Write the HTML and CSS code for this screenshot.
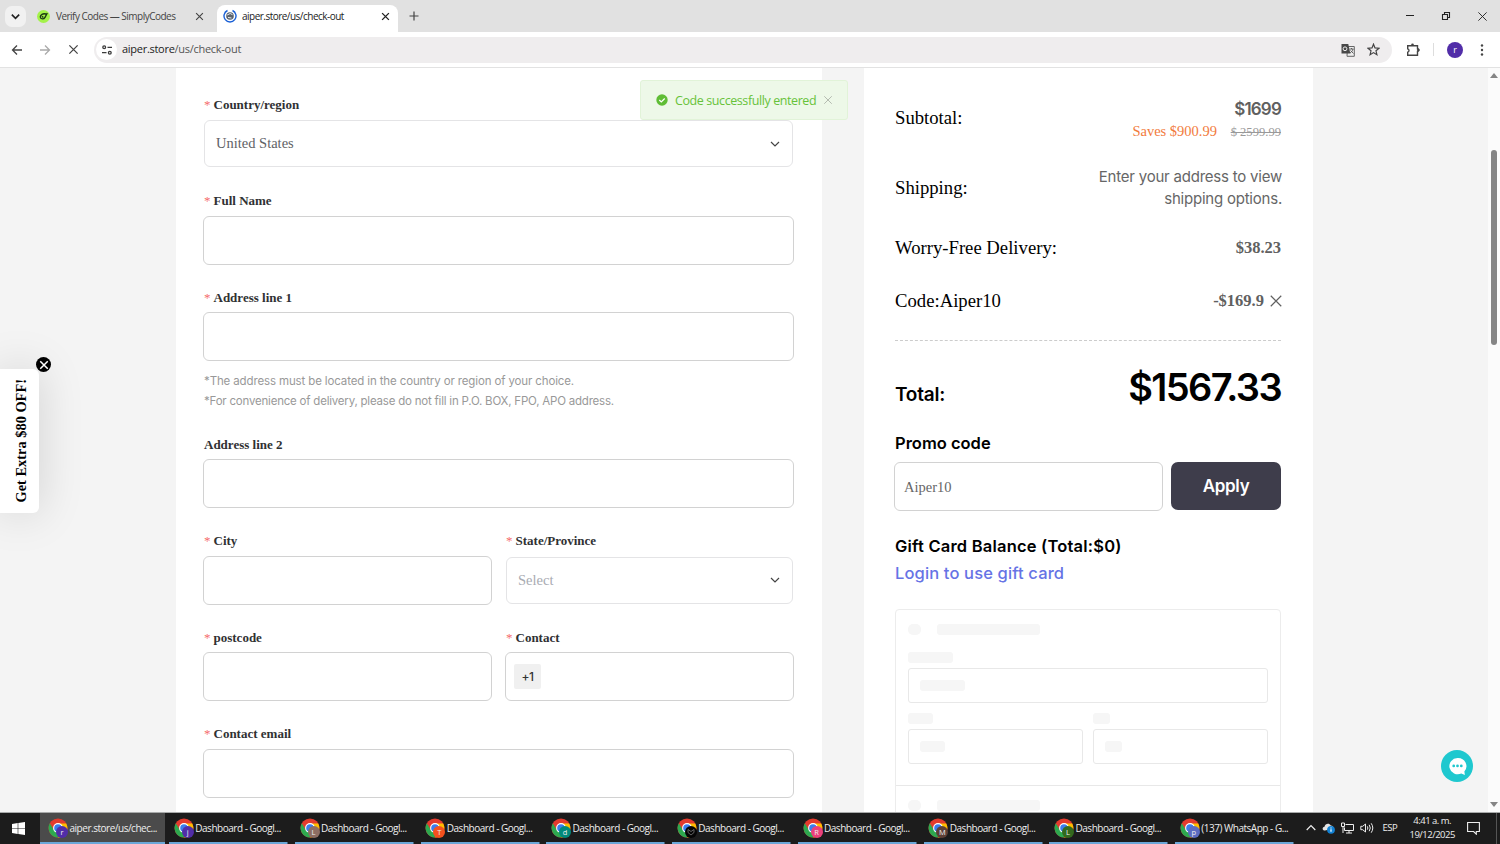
FILE: index.html
```html
<!DOCTYPE html>
<html lang="en">
<head>
  <meta charset="UTF-8" />
  <meta name="viewport" content="width=device-width, initial-scale=1.0">
  <title>aiper.store/us/check-out</title>
  <link rel="stylesheet" href="styles.css">
</head>
<body>
  <svg class="defs" width="0" height="0">
    <symbol id="chrome" viewBox="0 0 20 20">
      <circle cx="10" cy="10" r="9.5" fill="#e33b2e"/>
      <path d="M1.8 5.25A9.5 9.5 0 0 0 10 19.5L14 12.3 10 10 6 12.3Z" fill="#2da94f"/>
      <path d="M10 19.5A9.5 9.5 0 0 0 18.2 5.4L10 5.4 14 12.3Z" fill="#fdbd00"/>
      <circle cx="10" cy="10" r="4.9" fill="#fff"/>
      <circle cx="10" cy="10" r="3.8" fill="#3b7ded"/>
    </symbol>
    <symbol id="x" viewBox="0 0 12 12">
      <path d="M1.5 1.5l9 9M10.5 1.5l-9 9" fill="none" stroke="currentColor"/>
    </symbol>
    <symbol id="down" viewBox="0 0 12 12">
      <path d="M2 4l4 4 4-4" fill="none" stroke="currentColor"/>
    </symbol>
  </svg>

  <!-- Tabs -->
  <div class="tabs">
    <div class="tab-search"><svg width="11" height="11" stroke-width="1.8"><use href="#down"/></svg></div>
    <div class="tab">
      <svg width="13" height="13" viewBox="0 0 13 13"><circle cx="6.5" cy="6.5" r="6.5" fill="#a4f24a"/><path d="M9 4C6 3 3.2 4.700 3.300 7c.2 2.500 3.600 2.300 4.700.3L10.300 3M5 6.300l1.300 1.300" fill="none" stroke="#1d3a14" stroke-width="1.4"/></svg>
      <span class="tab-name">Verify Codes — SimplyCodes</span>
      <svg class="tab-close" width="9" height="9" stroke-width="1.5"><use href="#x"/></svg>
    </div>
    <div class="tab active">
      <svg width="14" height="14" viewBox="0 0 14 14"><path d="M4.5 1.5A6 6 0 1 0 9.5 1.5" fill="none" stroke="#1a60d6" stroke-width="1.4"/><circle cx="7" cy="7" r="3.8" fill="#59616c"/><path d="M4.2 6l3-1.5 2.3 1.2M5 8.5l3.5.5" fill="none" stroke="#e9edf2"/></svg>
      <span class="tab-name">aiper.store/us/check-out</span>
      <svg class="tab-close" width="9" height="9" stroke-width="1.8"><use href="#x"/></svg>
    </div>
    <svg class="plus" width="10" height="10" viewBox="0 0 10 10"><path d="M5 .5v9M.5 5h9" stroke="#444" stroke-width="1.2"/></svg>
    <div class="win-buttons">
      <svg width="10" height="10" viewBox="0 0 10 10"><path d="M1 4.5h8" stroke="#222"/></svg>
      <svg width="10" height="10" viewBox="0 0 10 10"><path d="M1.5 3.5h5v5h-5zM3.5 3V1.5h5v5H7" fill="none" stroke="#222" stroke-width="1.1"/></svg>
      <svg width="11" height="11" stroke-width="1"><use href="#x"/></svg>
    </div>
  </div>

  <!-- Address bar -->
  <div class="toolbar">
    <svg width="12" height="12" viewBox="0 0 12 12"><path d="M6 1.5L1.5 6 6 10.5M1.5 6H11" fill="none" stroke="#444" stroke-width="1.3"/></svg>
    <svg width="12" height="12" viewBox="0 0 12 12"><path d="M6 1.5L10.5 6 6 10.5M10.5 6H1" fill="none" stroke="#aaa" stroke-width="1.3"/></svg>
    <svg class="stop" width="11" height="11" stroke-width="1.4"><use href="#x"/></svg>
    <div class="omnibox">
      <div class="site-info">
        <svg width="12" height="12" viewBox="0 0 12 12" fill="none" stroke="#3c3c3c" stroke-width="1.3"><circle cx="3.2" cy="3.3" r="1.4"/><path d="M6.5 3.3H11M1 8.7h4.5"/><circle cx="8.8" cy="8.7" r="1.4"/></svg>
      </div>
      <span class="url"><b>aiper.store</b>/us/check-out</span>
      <svg width="14" height="14" viewBox="0 0 14 14"><path d="M6.5 3.5h6.8v9.8H6z" fill="#eee" stroke="#666"/><path d="M.5 1h6.8l2 9.5H.5z" fill="#484848"/><circle cx="4" cy="5.8" r="1.9" fill="none" stroke="#eee"/><path d="M8.5 6h4M10.5 5v1M12 6c-.5 2-1.5 3-3 4M9.5 7.5l3 3" stroke="#555" stroke-width=".9" fill="none"/></svg>
      <svg width="13" height="13" viewBox="0 0 13 13"><path d="M6.5 1.2l1.5 3.7 4 .3-3 2.6.9 3.9-3.4-2.1-3.4 2.1.9-3.9-3-2.6 4-.3z" fill="none" stroke="#444" stroke-width="1.2"/></svg>
    </div>
    <svg class="ext" width="14" height="14" viewBox="0 0 14 14"><path d="M1.7 2.7h9.8v3a1.3 1.3 0 0 1 0 2.7v3.9H1.7V9.2a1.7 1.7 0 0 0 0-3.3z" fill="none" stroke="#444" stroke-width="1.4"/><circle cx="6.5" cy="1.8" r="1.3" fill="#444"/><circle cx="12.3" cy="7.1" r="1.3" fill="#444"/></svg>
    <span class="sep"></span>
    <span class="profile">r</span>
    <svg width="4" height="12" viewBox="0 0 4 12" fill="#444"><circle cx="2" cy="1.5" r="1.2"/><circle cx="2" cy="6" r="1.2"/><circle cx="2" cy="10.5" r="1.2"/></svg>
  </div>

  <div class="page">
    <form class="address">
      <div class="field">
        <label class="req">Country/region</label>
        <div class="select">United States <svg width="12" height="12" stroke-width="1.2"><use href="#down"/></svg></div>
      </div>
      <div class="field">
        <label class="req">Full Name</label>
        <div class="input"></div>
      </div>
      <div class="field">
        <label class="req">Address line 1</label>
        <div class="input"></div>
      </div>
      <div class="tips">
        <p class="tip-1">*The address must be located in the country or region of your choice.</p>
        <p class="tip-2">*For convenience of delivery, please do not fill in P.O. BOX, FPO, APO address.</p>
      </div>
      <div class="field">
        <label>Address line 2</label>
        <div class="input"></div>
      </div>
      <div class="row">
        <div class="field">
          <label class="req">City</label>
          <div class="input"></div>
        </div>
        <div class="field">
          <label class="req">State/Province</label>
          <div class="select placeholder">Select <svg width="12" height="12" stroke-width="1.2"><use href="#down"/></svg></div>
        </div>
      </div>
      <div class="row">
        <div class="field">
          <label class="req">postcode</label>
          <div class="input"></div>
        </div>
        <div class="field">
          <label class="req">Contact</label>
          <div class="input"><span class="prefix">+1</span></div>
        </div>
      </div>
      <div class="field">
        <label class="req">Contact email</label>
        <div class="input"></div>
      </div>
    </form>

    <div class="summary">
      <div class="line subtotal">
        <span class="name">Subtotal:</span>
        <div class="prices">
          <div class="price">$1699</div>
          <div class="saves">Saves $900.99 <s>$ 2599.99</s></div>
        </div>
      </div>
      <div class="line shipping">
        <span class="name">Shipping:</span>
        <p class="ship-text">Enter your address to view<br>shipping options.</p>
      </div>
      <div class="line delivery">
        <span class="name">Worry-Free Delivery:</span>
        <b>$38.23</b>
      </div>
      <div class="line code">
        <span class="name">Code:Aiper10</span>
        <b>-$169.9 <svg width="14" height="14" stroke-width="1"><use href="#x"/></svg></b>
      </div>
      <div class="total">
        <span class="total-name">Total:</span>
        <span class="total-price">$1567.33</span>
      </div>
      <h3 class="promo-title">Promo code</h3>
      <div class="promo">
        <div class="promo-input">Aiper10</div>
        <div class="apply">Apply</div>
      </div>
      <h3 class="gift-title">Gift Card Balance (Total:$0)</h3>
      <a class="login">Login to use gift card</a>

      <!-- Payment placeholder -->
      <div class="skeleton">
        <div class="sk-method">
          <div class="sk-head"><i class="dot"></i><i class="bar w103"></i></div>
          <i class="bar w45"></i>
          <div class="sk-input"><i class="bar w45"></i></div>
          <div class="sk-cols">
            <div><i class="bar w25"></i><div class="sk-input"><i class="bar w25"></i></div></div>
            <div><i class="bar w17"></i><div class="sk-input"><i class="bar w17"></i></div></div>
          </div>
        </div>
        <div class="sk-method">
          <div class="sk-head"><i class="dot"></i><i class="bar w103"></i></div>
        </div>
      </div>
    </div>

    <div class="scrollbar">
      <svg width="8" height="5" viewBox="0 0 8 5"><path d="M4 0l4 5H0z" fill="#858585"/></svg>
      <span class="thumb"></span>
      <svg width="8" height="5" viewBox="0 0 8 5"><path d="M4 5l4-5H0z" fill="#858585"/></svg>
    </div>

    <div class="toast">
      <svg width="12" height="12" viewBox="0 0 12 12"><circle cx="6" cy="6" r="5.7" fill="#5fbd35"/><path d="M3.3 6l2 2 3.4-3.5" fill="none" stroke="#fff" stroke-width="1.2"/></svg>
      <span class="toast-text">Code successfully entered</span>
      <svg class="toast-close" width="10" height="10" stroke-width="1.2"><use href="#x"/></svg>
    </div>

    <div class="offer"><span>Get Extra $80 OFF!</span></div>
    <div class="offer-close"><svg width="10" height="10" stroke-width="1.8"><use href="#x"/></svg></div>

    <div class="chat">
      <svg width="19" height="19" viewBox="0 0 18 18"><path d="M9 1a8 7.7 0 1 0 3.6 14.7L16 17l-.5-3.3A8 7.7 0 0 0 9 1z" fill="#fff"/><g fill="#1fc8cf"><circle cx="5.4" cy="8.5" r="1.3"/><circle cx="9" cy="8.5" r="1.3"/><circle cx="12.6" cy="8.5" r="1.3"/></g></svg>
    </div>
  </div>

  <!-- Taskbar -->
  <div class="taskbar">
    <div class="start"><svg width="13" height="13" viewBox="0 0 13 13" fill="#fff"><path d="M0 1.9l5.7-.8v5.1H0zM6.3 1L13 0v6.2H6.3zM0 6.8h5.7v5.1L0 11.1zM6.3 6.8H13V13l-6.7-1z"/></svg></div>
    <div class="task current"><span class="app"><svg width="20" height="20"><use href="#chrome"/></svg><i class="who purple">r</i></span><span class="task-name">aiper.store/us/chec...</span></div>
    <div class="task"><span class="app"><svg width="20" height="20"><use href="#chrome"/></svg><i class="who purple">j</i></span><span class="task-name">Dashboard - Googl...</span></div>
    <div class="task"><span class="app"><svg width="20" height="20"><use href="#chrome"/></svg><i class="who taupe">L</i></span><span class="task-name">Dashboard - Googl...</span></div>
    <div class="task"><span class="app"><svg width="20" height="20"><use href="#chrome"/></svg><i class="who orange">T</i></span><span class="task-name">Dashboard - Googl...</span></div>
    <div class="task"><span class="app"><svg width="20" height="20"><use href="#chrome"/></svg><i class="who teal">d</i></span><span class="task-name">Dashboard - Googl...</span></div>
    <div class="task"><span class="app"><svg width="20" height="20"><use href="#chrome"/></svg><i class="who black"><svg width="8" height="8" viewBox="0 0 8 8"><path d="M1 1.5l3 2 3-2v3l-3 2.5-3-2.5z" fill="none" stroke="#777" stroke-width=".8"/></svg></i></span><span class="task-name">Dashboard - Googl...</span></div>
    <div class="task"><span class="app"><svg width="20" height="20"><use href="#chrome"/></svg><i class="who pink">R</i></span><span class="task-name">Dashboard - Googl...</span></div>
    <div class="task"><span class="app"><svg width="20" height="20"><use href="#chrome"/></svg><i class="who brown">M</i></span><span class="task-name">Dashboard - Googl...</span></div>
    <div class="task"><span class="app"><svg width="20" height="20"><use href="#chrome"/></svg><i class="who green">L</i></span><span class="task-name">Dashboard - Googl...</span></div>
    <div class="task"><span class="app"><svg width="20" height="20"><use href="#chrome"/></svg><i class="who indigo">p</i></span><span class="task-name">(137) WhatsApp - G...</span></div>
    <div class="tray">
      <svg width="10" height="7" viewBox="0 0 10 7"><path d="M.7 6L5 1.5 9.3 6" fill="none" stroke="#eee" stroke-width="1.2"/></svg>
      <svg width="13" height="12" viewBox="0 0 13 12"><path d="M3 8.5C0 8.5 0 5 2.5 4.7 3 1.5 7.5.8 8.7 3.5c2 0 3 1.5 2.8 3z" fill="#e4e4e4"/><circle cx="9" cy="7.8" r="3.9" fill="#1382d4"/><path d="M9 7.2v2.6M9 5.4v1" stroke="#fff" stroke-width="1.2"/></svg>
      <svg width="13" height="12" viewBox="0 0 13 12" fill="none" stroke="#eee"><path d="M4.5 2.5h8v6H3.5v-3M8 8.5V11M5 11h6M.5 1h3v3.5h-3zM2 4.5V11"/></svg>
      <svg width="14" height="12" viewBox="0 0 14 12" fill="none" stroke="#eee"><path d="M.8 4.3h1.9L5.5 2v8L2.7 7.7H.8zM7.3 4.3q1.2 1.7 0 3.4M9.2 2.8q2.2 3.2 0 6.4M11.2 1.3q3.2 4.7 0 9.4"/></svg>
      <span class="lang">ESP</span>
      <span class="clock">4:41 a. m.<br>19/12/2025</span>
      <svg width="13" height="14" viewBox="0 0 13 14"><path d="M.6 1.5h11.8v9H9.3v2.7L6.6 10.5h-6z" fill="none" stroke="#eee" stroke-width="1.1"/></svg>
    </div>
  </div>
</body>
</html>
```

FILE: styles.css
```css
* {
  box-sizing: border-box;
}

body {
  margin: 0;
  width: 1500px;
  height: 844px;
  overflow: hidden;
  display: flex;
  flex-direction: column;
  font-family: "Liberation Serif", "Times New Roman", serif;
  color: #000;
}

svg {
  display: block;
  flex: none;
}

.defs {
  position: absolute;
}

/* tabs */
.tabs {
  flex: none;
  height: 32px;
  display: flex;
  align-items: center;
  background: #e1e1e1;
  padding-left: 5px;
  font: 10px "Open Sans", sans-serif;
  color: #444;
}

.tab-search {
  width: 21px;
  height: 21px;
  border-radius: 7px;
  background: #f1f1f1;
  display: flex;
  align-items: center;
  justify-content: center;
  color: #222;
}

.tab {
  height: 27px;
  margin-top: 5px;
  margin-left: 11px;
  width: 180px;
  display: flex;
  align-items: center;
  padding: 0 13px 5px 0;
}

.tab-name {
  flex: 1;
  margin-left: 6px;
  white-space: nowrap;
  letter-spacing: -0.52px;
}

.tab.active {
  width: 181px;
  margin-left: 0;
  padding-left: 6px;
  padding-right: 8px;
  background: #fff;
  border-radius: 8px 8px 0 0;
  color: #222;
}

.active .tab-name {
  margin-left: 5px;
}

.plus {
  margin-left: 11px;
}

.win-buttons {
  margin-left: auto;
  display: flex;
  gap: 26px;
  padding-right: 12px;
  color: #222;
}

/* toolbar */
.toolbar {
  flex: none;
  height: 36px;
  display: flex;
  align-items: center;
  background: #fff;
  border-bottom: 1px solid #e2e2e2;
  padding: 0 15px 0 11px;
  gap: 16px;
  color: #444;
}

.stop {
  margin-left: 1px;
  margin-right: -1px;
}

.omnibox {
  flex: none;
  width: 1298px;
  height: 26px;
  border-radius: 13px;
  margin-right: -2px;
  background: #efedee;
  display: flex;
  align-items: center;
  gap: 12px;
  padding: 0 12px 0 2px;
}

.site-info {
  width: 21px;
  height: 21px;
  border-radius: 50%;
  background: #fff;
  display: flex;
  align-items: center;
  justify-content: center;
}

.url {
  flex: 1;
  margin-left: -7px;
  padding-bottom: 2px;
  font: 11px "Open Sans", sans-serif;
  letter-spacing: -0.28px;
  color: #555;
}

.url b {
  font-weight: 400;
  color: #222;
}

.sep {
  width: 1px;
  height: 13px;
  background: #ddd;
  margin-left: -3px;
}

.profile {
  width: 16px;
  height: 16px;
  border-radius: 50%;
  background: #512da8;
  color: #fff;
  font: 9px/15px "Open Sans", sans-serif;
  text-align: center;
  margin-left: -3px;
  margin-right: 1px;
}

/* page */
.page {
  flex: none;
  height: 744px;
  position: relative;
  display: flex;
  overflow: hidden;
  background: #f4f4f4;
}

.address {
  width: 646px;
  margin-left: 176px;
  padding: 25.6px 28px 0 27px;
  background: #fff;
}

.field {
  flex: 1;
  display: flex;
  flex-direction: column;
  margin-bottom: 22px;
}

.field label {
  height: 20px;
  margin: 0 0 5.5px 1px;
  font-size: 13px;
  font-weight: bold;
  line-height: 22px;
  color: #303133;
}

.req::before {
  content: "*";
  color: #f56c6c;
  font-weight: 400;
  margin-right: 3px;
}

.input {
  height: 49px;
  border: 1px solid #d2d2d2;
  border-radius: 6px;
  display: flex;
  align-items: center;
  padding-left: 8px;
}

.select {
  height: 47px;
  margin: 1px;
  border: 1px solid #e4e4e6;
  border-radius: 6px;
  display: flex;
  align-items: center;
  justify-content: space-between;
  padding: 0 11px;
  font-size: 14.5px;
  color: #606266;
}

.select svg {
  color: #444;
}

.placeholder {
  color: #a8abb2;
}

.prefix {
  width: 27px;
  height: 25px;
  border-radius: 2px;
  background: #f0f0f0;
  font: 500 12px/25px Inter, sans-serif;
  letter-spacing: -0.5px;
  text-align: center;
  color: #333;
}

.row {
  display: flex;
  gap: 13px;
}

.tips {
  margin: -12.5px 0 22px 1px;
  font: 11.5px/20.5px Inter, sans-serif;
  color: #999;
}

.tips p {
  margin: 0;
  white-space: nowrap;
}

.tip-1 {
  letter-spacing: -0.13px;
}

.tip-2 {
  letter-spacing: -0.21px;
}

/* summary */
.summary {
  width: 449px;
  margin-left: 42px;
  padding: 24px 32px 0 31px;
  background: #fff;
}

.line {
  display: flex;
  align-items: center;
  justify-content: space-between;
  color: #606060;
  font-size: 16.5px;
}

.name {
  font-size: 18.7px;
  color: #000;
}

.subtotal {
  height: 52px;
}

.shipping {
  height: 88px;
}

.delivery {
  height: 32px;
}

.code {
  height: 76px;
  padding-bottom: 2px;
}

.line b {
  display: flex;
  align-items: center;
  gap: 5px;
}

.code svg {
  margin-right: -2px;
}

.prices {
  text-align: right;
  padding-top: 6px;
}

.price {
  font: 600 17px/22px Inter, sans-serif;
  letter-spacing: -0.8px;
}

.saves {
  font-size: 14.5px;
  line-height: 23px;
  color: #f27b3d;
}

.saves s {
  margin-left: 10px;
  font-size: 12.6px;
  color: #999;
}

.ship-text {
  margin: 0 -1px 0 0;
  font: 15px/22px Inter, sans-serif;
  letter-spacing: -0.22px;
  text-align: right;
  color: #666;
}

.total {
  border-top: 1px dashed #ccc;
  height: 84px;
  padding-top: 22px;
  display: flex;
  align-items: baseline;
  justify-content: space-between;
  font-family: Inter, sans-serif;
  font-weight: 600;
}

.total-name {
  font-size: 19px;
  letter-spacing: -0.2px;
}

.total-price {
  font-size: 38px;
  line-height: 48px;
  letter-spacing: -1.6px;
}

.summary h3 {
  margin: 0;
  font: 600 16.5px/20px Inter, sans-serif;
}

.summary .promo-title {
  margin-top: 9px;
}

.summary .gift-title {
  letter-spacing: 0.2px;
}

.promo {
  display: flex;
  align-items: flex-start;
  gap: 8px;
  margin: 9px 0 25px -1px;
}

.promo-input {
  width: 269px;
  height: 49px;
  border: 1px solid #d2d2d2;
  border-radius: 6px;
  padding-left: 9px;
  font-size: 14.5px;
  line-height: 48px;
  color: #666;
}

.apply {
  width: 110px;
  height: 48px;
  border-radius: 7px;
  background: #3e3d4b;
  color: #fff;
  font: 600 17px/49px Inter, sans-serif;
  letter-spacing: -0.3px;
  text-align: center;
}

.login {
  display: block;
  margin-top: 6px;
  font: 500 16.5px/22px Inter, sans-serif;
  letter-spacing: 0.14px;
  color: #6673e5;
}

.skeleton {
  margin-top: 25px;
  height: 240px;
  border: 1px solid #ececec;
  border-radius: 4px;
}

.sk-method {
  height: 176px;
  padding: 14px 12px 0 12px;
  border-bottom: 1px solid #e8e8e8;
}

.sk-head {
  display: flex;
  gap: 16px;
  margin-bottom: 17px;
}

.dot,
.bar {
  display: block;
  height: 11px;
  border-radius: 3px;
  background: #f6f6f6;
}

.dot {
  width: 13px;
  border-radius: 5px;
}

.w103 { width: 103px; }
.w45 { width: 45px; }
.w25 { width: 25px; }
.w17 { width: 17px; }

.sk-input {
  height: 35px;
  margin-top: 5px;
  border: 1px solid #e8e8e8;
  border-radius: 3px;
  padding: 11px;
}

.sk-cols {
  display: grid;
  grid-template-columns: 1fr 1fr;
  gap: 10px;
  margin-top: 10px;
}

.scrollbar {
  margin-left: auto;
  width: 12px;
  background: #fbfbfb;
  display: flex;
  flex-direction: column;
  align-items: center;
  padding: 5px 0;
}

.thumb {
  width: 6px;
  height: 195px;
  border-radius: 3px;
  background: #858585;
  margin: 72px 0 auto;
}

/* floating things */
.toast {
  position: absolute;
  left: 640px;
  top: 12px;
  width: 208px;
  height: 40px;
  display: flex;
  align-items: center;
  padding: 0 14px 0 15px;
  background: #edf8e8;
  border: 1px solid #e1f3d8;
  border-radius: 3px;
  font: 12.5px "Open Sans", sans-serif;
  letter-spacing: -0.41px;
  color: #67c23a;
}

.toast-text {
  margin-left: 7px;
  white-space: nowrap;
}

.toast-close {
  margin-left: auto;
  color: #b4bbb0;
}

.offer {
  position: absolute;
  left: 0;
  top: 301px;
  width: 39px;
  height: 144px;
  padding-left: 3px;
  background: #fff;
  border-radius: 0 6px 6px 0;
  box-shadow: 0 0 45px rgba(0, 0, 0, 0.15);
  display: flex;
  align-items: center;
  justify-content: center;
}

.offer span {
  writing-mode: vertical-rl;
  transform: rotate(180deg);
  font-size: 14.4px;
  font-weight: bold;
  white-space: nowrap;
}

.offer-close {
  position: absolute;
  left: 36px;
  top: 289px;
  width: 15px;
  height: 15px;
  border-radius: 50%;
  background: #000;
  color: #fff;
  display: flex;
  align-items: center;
  justify-content: center;
}

.chat {
  position: absolute;
  left: 1441px;
  top: 682px;
  width: 32px;
  height: 32px;
  border-radius: 50%;
  background: #1fc8cf;
  display: flex;
  align-items: center;
  justify-content: center;
}

/* taskbar */
.taskbar {
  flex: none;
  height: 32px;
  display: flex;
  background: #1c1c1c;
  border-top: 1px solid #a8aaaa;
  font: 10px "Open Sans", sans-serif;
  color: #eee;
}

.start {
  width: 40px;
  padding: 9px 12px;
}

.task {
  width: 125.75px;
  display: flex;
  align-items: center;
  padding: 0 0 2px 8px;
  background: linear-gradient(#6ba7d8, #6ba7d8) 3.3px 100% / 118.5px 2px no-repeat;
}

.task.current {
  background: linear-gradient(#6ba7d8, #6ba7d8) 0 100% / 125px 2px no-repeat, linear-gradient(#4b4b4b, #4b4b4b) 0 0 / 125px 100% no-repeat;
}

.app {
  position: relative;
}

.who {
  position: absolute;
  left: 8px;
  top: 8px;
  width: 12px;
  height: 12px;
  border-radius: 50%;
  display: flex;
  align-items: center;
  justify-content: center;
  font: 7.5px "Open Sans", sans-serif;
}

.purple { background: #512da8; }
.taupe { background: #8d6e63; }
.orange { background: #f4511e; }
.teal { background: #00897b; }
.black { background: #050505; }
.pink { background: #ec407a; }
.brown { background: #5d4037; }
.green { background: #33691e; }
.indigo { background: #5c6bc0; }

.task-name {
  margin-left: 1.5px;
  white-space: nowrap;
  letter-spacing: -0.48px;
}

.tray {
  flex: 1;
  display: flex;
  align-items: center;
  padding: 0 0 2px 8px;
  gap: 6px;
  margin-right: 3px;
  border-right: 1px solid #555;
}

.lang {
  margin-left: 3px;
  font-size: 9.5px;
  letter-spacing: -0.5px;
}

.clock {
  width: 58px;
  text-align: center;
  font-size: 9.5px;
  line-height: 14px;
  letter-spacing: -0.5px;
}
```
